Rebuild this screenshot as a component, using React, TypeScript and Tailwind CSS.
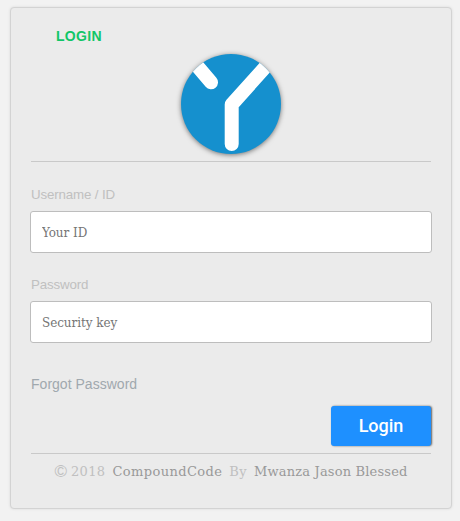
const sans = "font-['Liberation_Sans',Arial,sans-serif]";
const serif = "font-['DejaVu_Serif_Condensed','DejaVu_Serif',serif]";
const wideSerif = "font-['DejaVu_Serif',serif]";

function Logo() {
  return (
    <svg
      viewBox="0 0 100 100"
      className="mx-auto mt-[9px] block size-[100px] rounded-full bg-[#1590ce] shadow-[0_1px_5px_rgba(0,0,0,0.5)]"
      fill="none"
      stroke="#fff"
      strokeWidth="14"
      strokeLinecap="round"
      strokeLinejoin="round"
    >
      <path d="M4.6 -1.7 L30 28.3" />
      <path d="M96 0 L50.7 50.5 V90" />
    </svg>
  );
}

interface FieldProps {
  label: string;
  placeholder: string;
  type: string;
}

function Field({ label, placeholder, type }: FieldProps) {
  return (
    <label className="block h-[90px]">
      <span className={`${sans} block h-[25px] text-[13.33px] leading-[18px] tracking-[-0.15px] text-[#c0c0c0]`}>
        {label}
      </span>
      <input
        type={type}
        placeholder={placeholder}
        className={`${serif} -ml-px block h-[42px] w-[402px] rounded-[3px] border border-[#bdbdbd] bg-white px-[11px] text-[13.33px] tracking-[-0.05px] placeholder:text-[#757575]`}
      />
    </label>
  );
}

export default function App() {
  return (
    <div className="h-[521px] bg-[#f2f2f2] pt-[7px] pl-[10px]">
      <main className="h-[502px] w-[442px] rounded-[4px] border border-[#d3d3d3] bg-[#ebebeb] px-5 pt-5 shadow-[0_0_3px_rgba(0,0,0,0.1)]">
        <h1 className={`${sans} ml-[25px] h-[17px] text-[14px] leading-[17px] font-bold tracking-[0.3px] text-[#12c668]`}>
          LOGIN
        </h1>
        <Logo />
        <hr className="mt-[7px] h-px border-0 bg-[#c9c9c9]" />
        <form className="pt-6">
          <Field label="Username / ID" placeholder="Your ID" type="text" />
          <Field label="Password" placeholder="Security key" type="password" />
          <a className={`${sans} block h-[40px] pt-[9px] text-[14px] leading-[18px] tracking-[0.02px] text-[#a0a8ae]`}>
            Forgot Password
          </a>
          <button
            type="button"
            className="ml-[300px] block h-10 w-[100px] rounded-[3px] bg-[#1e90ff] pb-px font-[Roboto,sans-serif] text-[18px] font-medium text-white shadow-[1px_0_2px_rgba(0,0,0,0.6)]"
          >
            Login
          </button>
        </form>
        <hr className="mt-[7px] h-px border-0 bg-[#c9c9c9]" />
        <footer className={`${wideSerif} mt-2 flex justify-center gap-[7px] text-[13px] leading-5 tracking-[0.35px] whitespace-nowrap text-[#c0c0c0]`}>
          <span className="flex gap-1">
            <span className={`${sans} text-[17px] tracking-normal`}>©</span>
            <span>2018</span>
          </span>
          <span className="tracking-[0.4px] text-[#999]">CompoundCode</span>
          <span>By</span>
          <span className="tracking-[0.18px] text-[#999]">Mwanza Jason Blessed</span>
        </footer>
      </main>
    </div>
  );
}
